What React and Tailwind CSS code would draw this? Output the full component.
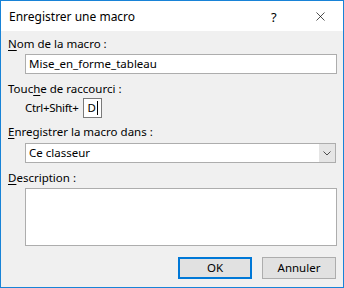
import { X } from "lucide-react";

function Key({ children }) {
  return <span className="underline underline-offset-2">{children}</span>;
}

export default function App() {
  return (
    <div
      className="w-[344px] h-[288px] border border-[#1883d7] bg-[#f0f0f0] flex flex-col text-[11.5px] leading-[16px] text-black"
      style={{ fontFamily: '"Noto Sans", "Segoe UI", sans-serif' }}
    >
      {/* title bar */}
      <div className="h-[30px] bg-white flex items-center pl-[8px] shrink-0">
        <span className="flex-1 mt-[1px] text-[12px]">Enregistrer une macro</span>
        <span className="w-[12px] text-[13px] mr-[30px] mt-[1px]">?</span>
        <X className="w-[15px] h-[15px] mr-[15px]" strokeWidth={1.1} />
      </div>

      <div className="flex flex-col pl-[7px] pr-[6px]">
        <div className="mt-[5px]">
          <Key>N</Key>om de la macro :
        </div>
        <div className="mt-[2px] ml-[17px] h-[20px] bg-white border border-[#adadad] flex items-center pl-[3px]">
          Mise_en_forme_tableau
        </div>

        <div className="mt-[7px]">
          Touc<Key>h</Key>e de raccourci :
        </div>
        <div className="mt-[1px] ml-[17px] flex items-center h-[20px]">
          <span className="mr-[4px] tracking-[-0.3px]">Ctrl+Shift+</span>
          <div className="w-[19px] h-[20px] bg-white border border-[#7a7a7a] flex items-center pl-[4px]">
            <span>D</span>
            <span className="w-[1px] h-[14px] bg-black ml-[1px]" />
          </div>
        </div>

        <div className="mt-[6px]">
          <Key>E</Key>nregistrer la macro dans :
        </div>
        <div className="mt-[3px] ml-[17px] mr-[1px] h-[20px] bg-white border border-[#adadad] flex items-center">
          <span className="flex-1 pl-[3px]">Ce classeur</span>
          <div className="w-[16px] h-[18px] bg-[#e5e5e5] flex items-center justify-center">
            <svg width="8" height="5" viewBox="0 0 8 5" fill="none">
              <path d="M0.5 0.5 L4 4 L7.5 0.5" stroke="#4d4d4d" strokeWidth="1" />
            </svg>
          </div>
        </div>

        <div className="mt-[7px]">
          <Key>D</Key>escription :
        </div>
        <div className="mt-[2px] ml-[17px] h-[58px] bg-white border border-[#adadad]" />

        <div className="mt-[11px] flex justify-end gap-[10px] pr-[1px]">
          <button className="w-[74px] h-[22px] bg-[#e1e1e1] border-2 border-[#0078d7] flex items-center justify-center">
            OK
          </button>
          <button className="w-[74px] h-[22px] bg-[#e1e1e1] border border-[#adadad] flex items-center justify-center">
            Annuler
          </button>
        </div>
      </div>
    </div>
  );
}
